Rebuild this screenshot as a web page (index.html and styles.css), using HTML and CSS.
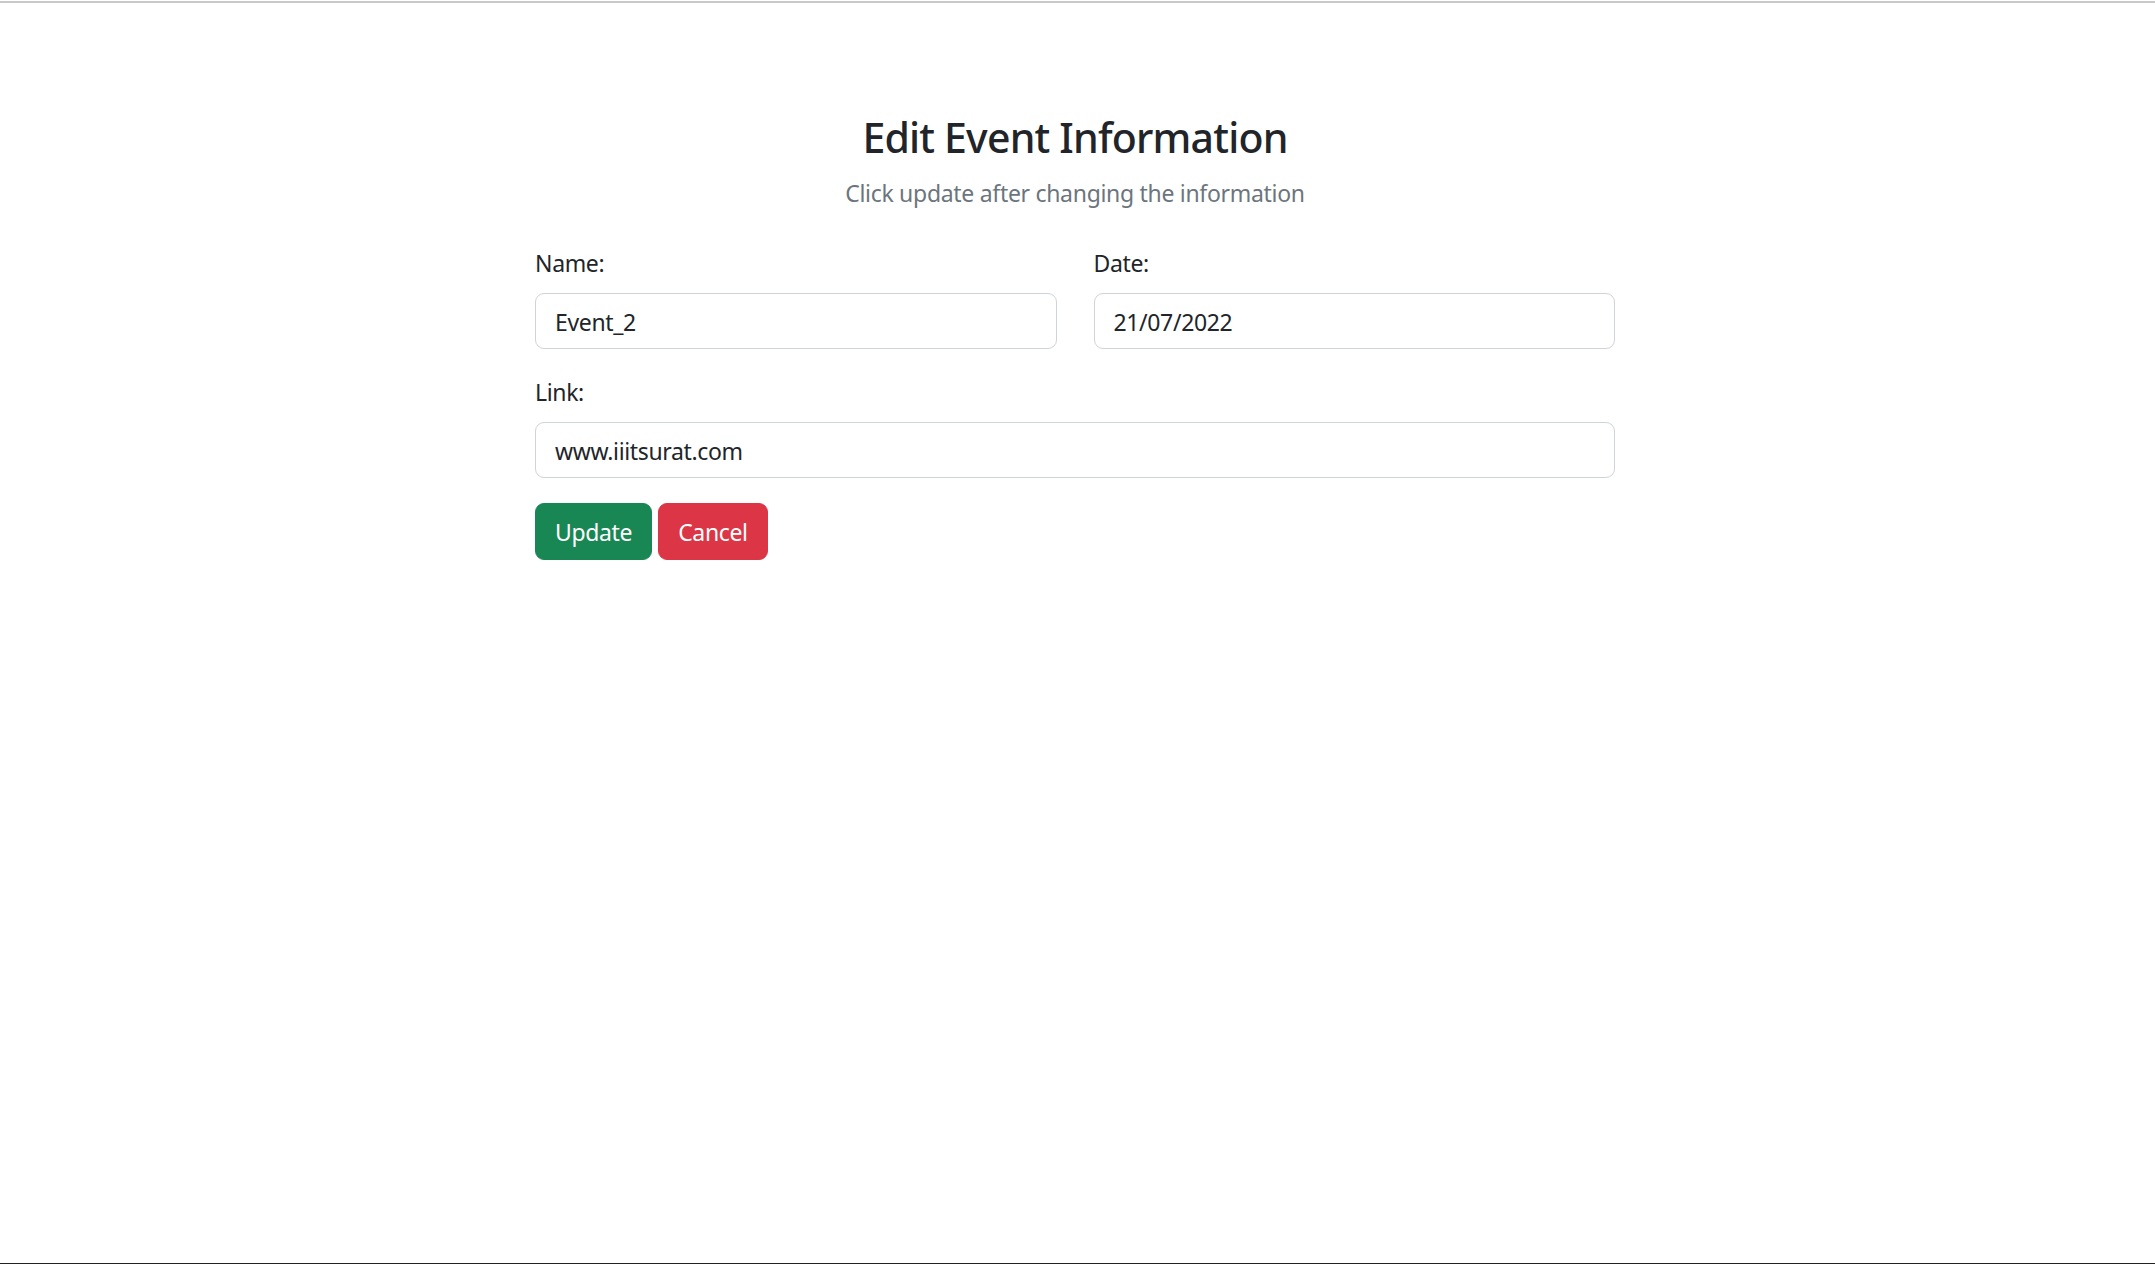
FILE: index.html
```html
<!DOCTYPE html>
<html lang="en">
<head>
<meta charset="utf-8">
<title>Edit Event Information</title>
<link rel="stylesheet" href="styles.css">
</head>
<body>
<div class="topline"></div>
<main class="page">
  <div class="wrap">
    <h3 class="title">Edit Event Information</h3>
    <p class="subtitle">Click update after changing the information</p>
    <form class="form">
      <div class="row">
        <div class="field">
          <label class="label" for="name">Name:</label>
          <input class="control" id="name" type="text" value="Event_2">
        </div>
        <div class="field">
          <label class="label" for="date">Date:</label>
          <input class="control" id="date" type="text" value="21/07/2022">
        </div>
      </div>
      <div class="field">
        <label class="label" for="link">Link:</label>
        <input class="control" id="link" type="text" value="www.iiitsurat.com">
      </div>
      <div class="actions">
        <button type="button" class="btn btn-success">Update</button>
        <button type="button" class="btn btn-danger">Cancel</button>
      </div>
    </form>
  </div>
</main>
<div class="bottomline"></div>
</body>
</html>
```
FILE: styles.css
```css
html, body {
  margin: 0;
  padding: 0;
  background: #ffffff;
}
body {
  font-family: "Noto Sans", "Open Sans", sans-serif;
  font-size: 23px;
  letter-spacing: -0.35px;
  line-height: 1.5;
  color: #212529;
  height: 1264px;
  display: flex;
  flex-direction: column;
}
.topline {
  margin-top: 1px;
  height: 2px;
  background: #c8c8c8;
  flex: none;
}
.page {
  flex: 1;
}
.wrap {
  width: 1080px;
  padding-right: 5px;
  margin: 0 auto;
  padding-top: 109px;
}
.title {
  margin: 0 0 13px;
  text-align: center;
  font-size: 41px;
  letter-spacing: -0.8px;
  font-weight: 500;
  line-height: 50px;
  color: #212529;
}
.subtitle {
  margin: 0 0 34px;
  text-align: center;
  color: #6c757d;
  font-size: 23px;
  letter-spacing: -0.3px;
  line-height: 36px;
}
.row {
  display: flex;
  gap: 37px;
}
.row .field {
  flex: 1;
}
.field {
  display: flex;
  flex-direction: column;
  margin-bottom: 25px;
}
.label {
  line-height: 36px;
  margin-bottom: 12px;
}
.control {
  box-sizing: border-box;
  height: 56px;
  width: 100%;
  padding: 2px 19px 0;
  font-family: inherit;
  font-size: 23px;
  letter-spacing: -0.35px;
  color: #212529;
  background: #fff;
  border: 1.5px solid #ced4da;
  border-radius: 9px;
  outline: none;
}
.actions {
  display: flex;
  gap: 6px;
  margin-top: 1px;
}
.btn {
  box-sizing: border-box;
  height: 57px;
  padding: 0 19px;
  font-family: inherit;
  font-size: 23px;
  letter-spacing: -0.35px;
  color: #fff;
  border: 1.5px solid transparent;
  border-radius: 9px;
  cursor: pointer;
}
.btn-success {
  background: #198754;
  border-color: #198754;
}
.btn-danger {
  background: #dc3545;
  border-color: #dc3545;
}
.bottomline {
  flex: none;
  height: 1px;
  background: #222222;
}
```
